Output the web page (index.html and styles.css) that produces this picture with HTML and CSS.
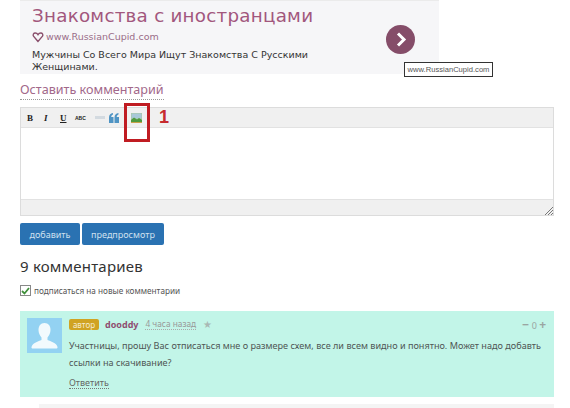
FILE: index.html
```html
<!DOCTYPE html>
<html lang="ru">
<head>
  <meta charset="UTF-8">
  <title>Комментарии</title>
  <link rel="stylesheet" href="styles.css">
</head>
<body>
  <div class="page">
    <div class="ad">
      <div class="ad-text">
        <div class="ad-title">Знакомства с иностранцами</div>
        <div class="ad-url">
          <svg width="12" height="11" viewBox="0 0 12 11"><path d="M6 9.500 1.500 4.200C.6 2.600 1.600 1 3.200 1 4.400 1 5.400 1.600 6 2.600 6.600 1.600 7.600 1 8.800 1c1.600 0 2.600 1.600 1.700 3.200z" fill="none" stroke="#8a4f6c" stroke-width="1.400"/></svg>
          www.RussianCupid.com
        </div>
        <div class="ad-desc">Мужчины Со Всего Мира Ищут Знакомства С Русскими Женщинами.</div>
      </div>
      <div class="ad-go">
        <svg width="29" height="29" viewBox="0 0 29 29"><circle cx="14.500" cy="14.500" r="14.500" fill="#854d69"/><path d="M12 8.500l6 6-6 6" fill="none" stroke="#fff" stroke-width="3"/></svg>
      </div>
      <div class="ad-tip">www.RussianCupid.com</div>
    </div>

    <div class="leave"><span class="leave-link">Оставить комментарий</span></div>

    <div class="editor">
      <div class="toolbar">
        <span class="tool tool-b">B</span>
        <span class="tool tool-i">I</span>
        <span class="tool tool-u">U</span>
        <span class="tool tool-abc">ABC</span>
        <span class="tool-line"></span>
        <svg class="tool-quote" width="10" height="10" viewBox="0 0 10 10">
          <path d="M4 0v1.500C2.800 2 2.300 2.700 2.200 4H4.500v6H0V4.500C0 2 1.300.4 4 0zM9.500 0v1.500C8.300 2 7.800 2.700 7.700 4H10v6H5.500V4.500C5.500 2 6.800.4 9.500 0z" fill="#4f94c4"/>
        </svg>
        <svg class="tool-img" width="11" height="10" viewBox="0 0 11 10">
          <rect width="11" height="10" fill="#a9c9a0"/>
          <rect x=".5" y=".5" width="10" height="5" fill="#a8c8d8"/>
          <path d="M0 7l3-2.500 3 2 2-1.500 3 2v3H0z" fill="#4f9a3e"/>
          <path d="M0 9h11v1H0z" fill="#c9a24a"/>
        </svg>
        <div class="mark"></div>
        <span class="mark-num">1</span>
      </div>
      <div class="editor-area"></div>
      <div class="editor-foot">
        <svg class="grip" width="9" height="9" viewBox="0 0 9 9"><path d="M9 1 1 9M9 4 4 9M9 7 7 9" stroke="#777" stroke-width="1"/></svg>
      </div>
    </div>

    <div class="buttons">
      <button class="btn">добавить</button>
      <button class="btn btn-wide">предпросмотр</button>
    </div>

    <h2 class="count">9 комментариев</h2>

    <label class="subscribe">
      <span class="check"><svg width="9" height="8" viewBox="0 0 9 8"><path d="M1 4l2.500 2.500L8 1" fill="none" stroke="#3f8f3a" stroke-width="1.800"/></svg></span>
      подписаться на новые комментарии
    </label>

    <div class="comment">
      <div class="avatar">
        <svg width="35" height="35" viewBox="0 0 35 35">
          <rect width="35" height="35" fill="#93d2f2"/>
          <path d="M17.500 5c4 0 6 3 6 7 0 3-1.500 6-3 7.500v2.500c3 1.500 9 2.500 10 7 .2 1-.5 1.500-1.500 1.500H6c-1 0-1.700-.5-1.500-1.500 1-4.500 7-5.500 10-7v-2.500C13 18 11.500 15 11.500 12c0-4 2-7 6-7z" fill="#f2fafd"/>
        </svg>
      </div>
      <div class="comment-body">
        <div class="comment-head">
          <span class="badge">автор</span>
          <span class="author">dooddy</span>
          <span class="time">4 часа назад</span>
          <span class="star">★</span>
          <span class="votes"><b>−</b> 0 <b>+</b></span>
        </div>
        <p class="comment-text">Участницы, прошу Вас отписаться мне о размере схем, все ли всем видно и понятно. Может надо добавть ссылки на скачивание?</p>
        <span class="reply">Ответить</span>
      </div>
    </div>

    <div class="next-comment"></div>
  </div>
</body>
</html>
```

FILE: styles.css
```css
body {
  margin: 0;
  background: #fff;
  font-family: "Open Sans", "Noto Sans", sans-serif;
  color: #444;
  overflow: hidden;
}
.page {
  width: 534px;
  height: 408px;
  margin-left: 20px;
}

/* ad */
.ad {
  position: relative;
  width: 419px;
  height: 74px;
  box-sizing: border-box;
  padding: 2px 24px 0 12px;
  display: flex;
  justify-content: space-between;
  align-items: flex-start;
  background: #f6f6f8;
  border-top: 1px solid #ebebeb;
}
.ad-text {
  width: 300px;
}
.ad-title {
  font-family: "DejaVu Sans", sans-serif;
  font-size: 18.300px;
  line-height: 26px;
  letter-spacing: .25px;
  color: #a2577d;
  white-space: nowrap;
}
.ad-url {
  display: flex;
  align-items: center;
  gap: 2px;
  margin-top: 0;
  font-family: "DejaVu Sans", sans-serif;
  font-size: 9.500px;
  line-height: 16px;
  color: #9a6d88;
}
.ad-desc {
  margin-top: 4px;
  font-family: "DejaVu Sans", sans-serif;
  font-size: 9.500px;
  line-height: 12px;
  color: #333;
}
.ad-go {
  margin-top: 22px;
  line-height: 0;
}
.ad-tip {
  position: absolute;
  left: 384px;
  top: 61px;
  width: 89px;
  height: 15px;
  box-sizing: border-box;
  border: 1px solid #333;
  background: #fff;
  font-family: "Liberation Sans", sans-serif;
  font-size: 7.600px;
  line-height: 13px;
  text-align: center;
  color: #555;
  white-space: nowrap;
}

/* comment form */
.leave {
  height: 33px;
  padding-top: 3px;
  box-sizing: border-box;
}
.leave-link {
  display: inline-block;
  font-family: "Noto Sans", sans-serif;
  font-size: 12.600px;
  line-height: 18px;
  color: #a2688a;
  border-bottom: 1px dotted #999;
}
.editor {
  border: 1px solid #dcdcdc;
  height: 109px;
  box-sizing: border-box;
  background: #fff;
  display: flex;
  flex-direction: column;
}
.toolbar {
  position: relative;
  height: 19px;
  flex: none;
  display: flex;
  align-items: center;
  background: #f0f0f0;
  border-bottom: 1px solid #e2e2e2;
  padding-left: 6px;
  color: #222;
}
.tool {
  font-family: "Liberation Serif", serif;
  font-size: 9px;
  font-weight: bold;
  line-height: 12px;
}
.tool-b { width: 17px; }
.tool-i { width: 16px; font-style: italic; }
.tool-u { width: 15px; text-decoration: underline; }
.tool-abc { width: 20px; font-family: "Liberation Sans", sans-serif; font-size: 5px; }
.tool-line {
  width: 10px;
  height: 3px;
  background: #d3dae0;
  margin-right: 4px;
}
.tool-quote {
  flex: none;
  margin-right: 12px;
}
.tool-img {
  flex: none;
}
.mark {
  position: absolute;
  left: 103px;
  top: -5px;
  width: 26px;
  height: 39px;
  box-sizing: border-box;
  border: 3px solid #c01c22;
}
.mark-num {
  position: absolute;
  left: 138px;
  top: -2px;
  font-family: "Liberation Sans", sans-serif;
  font-size: 18px;
  font-weight: bold;
  line-height: 22px;
  color: #c62a2e;
}
.editor-area {
  flex: 1;
}
.editor-foot {
  position: relative;
  height: 15px;
  flex: none;
  background: #f0f0f0;
  border-top: 1px solid #e2e2e2;
}
.grip {
  position: absolute;
  right: 0;
  bottom: 0;
}
.buttons {
  display: flex;
  gap: 2px;
  margin-top: 7px;
}
.btn {
  width: 60px;
  height: 22px;
  padding: 0;
  border: 0;
  border-radius: 2px;
  background: #2a72b2;
  color: #cfe0ef;
  font-family: "Noto Sans", sans-serif;
  font-size: 9px;
}
.btn-wide {
  width: 82px;
}
.count {
  margin: 10px 0 0;
  font-family: "Noto Sans", sans-serif;
  font-size: 15px;
  font-weight: normal;
  line-height: 22px;
  letter-spacing: .2px;
  color: #333;
}
.subscribe {
  display: flex;
  align-items: center;
  gap: 3px;
  margin-top: 7px;
  font-family: "Noto Sans", sans-serif;
  font-size: 8.200px;
  line-height: 13px;
  color: #555;
}
.check {
  width: 9px;
  height: 9px;
  display: flex;
  align-items: center;
  justify-content: center;
  border: 1px solid #888;
  background: #fff;
}

/* comment */
.comment {
  display: flex;
  gap: 7px;
  height: 86px;
  margin-top: 14px;
  padding: 7px 8px 0 7px;
  box-sizing: border-box;
  background: #c2f5e8;
}
.avatar {
  flex: none;
  line-height: 0;
}
.comment-body {
  flex: 1;
  font-family: "Noto Sans", sans-serif;
  font-size: 9.500px;
  color: #555;
}
.comment-head {
  display: flex;
  align-items: center;
  height: 12px;
  white-space: nowrap;
}
.badge {
  width: 30px;
  height: 11px;
  margin-right: 6px;
  border-radius: 2px;
  background: #d0a322;
  color: #f5ecd0;
  font-size: 8px;
  line-height: 11px;
  text-align: center;
}
.author {
  margin-right: 7px;
  color: #8f4d70;
  font-size: 9px;
  font-weight: bold;
}
.time {
  margin-right: 7px;
  color: #999;
  font-size: 8.300px;
  border-bottom: 1px dotted #aaa;
  line-height: 11px;
}
.star {
  color: #a9b8b4;
  font-size: 10px;
}
.votes {
  margin-left: auto;
  color: #9aa5a2;
  font-size: 9px;
}
.votes b {
  font-size: 12px;
}
.comment-text {
  margin: 7px 0 0;
  font-size: 9.100px;
  line-height: 17px;
  color: #4f5654;
}
.reply {
  display: inline-block;
  margin-top: 6px;
  font-size: 9px;
  line-height: 11px;
  color: #666;
  border-bottom: 1px dotted #777;
}
.next-comment {
  height: 4px;
  margin: 7px 0 0 19px;
  background: #f4f4f4;
}
```
